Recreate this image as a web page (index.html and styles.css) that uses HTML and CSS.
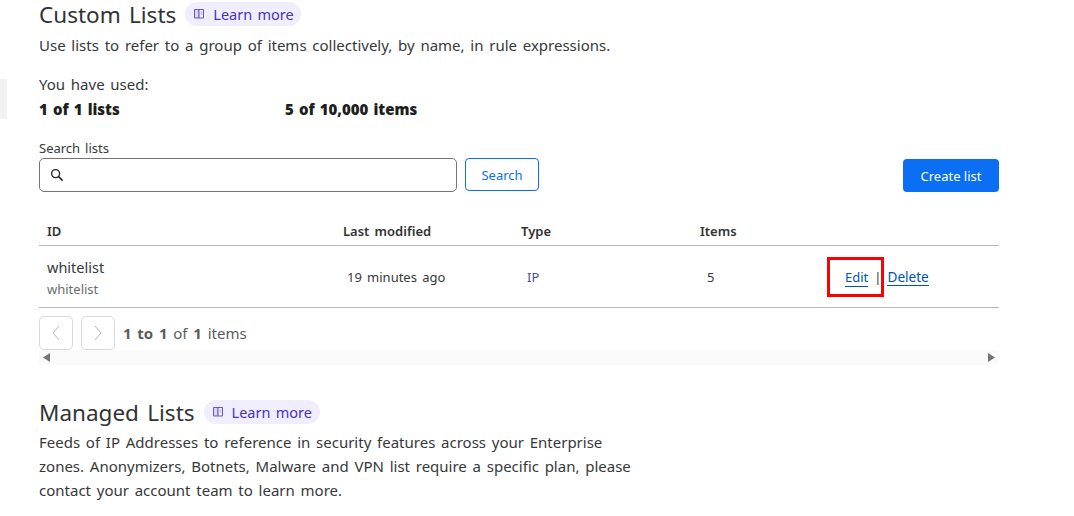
FILE: index.html
```html
<!DOCTYPE html>
<html lang="en">
<head>
<meta charset="utf-8">
<title>Custom Lists</title>
<link rel="stylesheet" href="styles.css">
</head>
<body>
<div class="sliver"></div>
<main class="page">
  <section class="head">
    <div class="title-row">
      <h2 class="title">Custom Lists</h2>
      <a class="pill" href="#">
        <svg class="book" viewBox="0 0 12 12" width="12" height="12"><path d="M.5 1.5h4.5v8.5H.5z" fill="#dcd5f8" stroke="#6a55c8"/><path d="M5 1.5h4.5v8.5H5z" fill="#f6f4ff" stroke="#6a55c8"/><path d="M6.5 4h2M6.5 6h2" stroke="#a99ae6"/></svg>
        <span>Learn more</span>
      </a>
    </div>
    <p class="desc">Use lists to refer to a group of items collectively, by name, in rule expressions.</p>
  </section>
  <section class="usage">
    <div>You have used:</div>
    <div class="usage-row"><strong class="usage-a">1 of 1 lists</strong><strong>5 of 10,000 items</strong></div>
  </section>
  <section class="search">
    <div class="search-main">
      <label class="search-label">Search lists</label>
      <div class="search-controls">
        <div class="input">
          <svg viewBox="0 0 16 16" width="16" height="16"><circle cx="6.6" cy="6.6" r="4" fill="none" stroke="#222" stroke-width="1.3"/><path d="M9.6 9.6l4 4" stroke="#222" stroke-width="1.5" fill="none"/></svg>
        </div>
        <button class="btn-outline">Search</button>
      </div>
    </div>
    <button class="btn-primary">Create list</button>
  </section>
  <table class="table">
    <thead>
      <tr><th class="c-id">ID</th><th class="c-mod">Last modified</th><th class="c-type">Type</th><th class="c-items">Items</th><th></th></tr>
    </thead>
    <tbody>
      <tr>
        <td class="id-cell"><div class="name">whitelist</div><div class="sub">whitelist</div></td>
        <td class="val">19 minutes ago</td>
        <td class="val type">IP</td>
        <td class="val count">5</td>
        <td class="actions">
          <span class="hl"><a href="#">Edit</a></span><span class="sep">|</span><a href="#" class="del">Delete</a>
        </td>
      </tr>
    </tbody>
  </table>
  <div class="pager">
    <button class="pg"><svg viewBox="0 0 12 20" width="12" height="20"><path d="M9 3L3 10l6 7" fill="none" stroke="#b5b5b5" stroke-width="1"/></svg></button>
    <button class="pg"><svg viewBox="0 0 12 20" width="12" height="20"><path d="M3 3l6 7-6 7" fill="none" stroke="#b5b5b5" stroke-width="1"/></svg></button>
    <span class="pg-text"><b>1 to 1</b> of <b>1</b> items</span>
  </div>
  <div class="scroll">
    <svg viewBox="0 0 7 9" width="7" height="9"><path d="M7 0v9L0 4.5z" fill="#757575"/></svg>
    <svg viewBox="0 0 7 9" width="7" height="9"><path d="M0 0v9l7-4.5z" fill="#757575"/></svg>
  </div>
  <section class="managed">
    <div class="title-row">
      <h2 class="title">Managed Lists</h2>
      <a class="pill" href="#">
        <svg class="book" viewBox="0 0 12 12" width="12" height="12"><path d="M.5 1.5h4.5v8.5H.5z" fill="#dcd5f8" stroke="#6a55c8"/><path d="M5 1.5h4.5v8.5H5z" fill="#f6f4ff" stroke="#6a55c8"/><path d="M6.5 4h2M6.5 6h2" stroke="#a99ae6"/></svg>
        <span>Learn more</span>
      </a>
    </div>
    <p class="desc narrow">Feeds of IP Addresses to reference in security features across your Enterprise zones. Anonymizers, Botnets, Malware and VPN list require a specific plan, please contact your account team to learn more.</p>
  </section>
</main>
</body>
</html>
```
FILE: styles.css
```css
*, *::before { box-sizing: border-box; }
html, body { margin: 0; padding: 0; height: 516px; overflow: hidden; background: #fff; }
body { font-family: "Noto Sans", sans-serif; color: #36393a; font-size: 15px; line-height: 24px; word-spacing: 1.85px; }
.sliver { position: absolute; left: 0; top: 79px; width: 7px; height: 40px; background: #f2f2f2; }
.page { width: 999px; padding-left: 39px; }
.title-row { display: flex; align-items: center; gap: 9px; height: 30px; }
.title { margin: 0; font-size: 22.5px; font-weight: 400; line-height: 30px; color: #313335; word-spacing: 2.5px; }
.pill { display: inline-flex; align-items: center; gap: 7px; height: 24px; width: 116px; padding: 0 0 0 9px; margin-bottom: 2px; border-radius: 12px; background: #f0eefd; color: #4a32c4; text-decoration: none; font-size: 14.5px; word-spacing: 1.5px; }
.desc { margin: 0; padding-top: 3px; line-height: 24px; }
.head { height: 72px; }
.narrow { width: 600px; padding-top: 2px; }
.usage { height: 54px; }
.usage-row { display: flex; font-weight: 600; color: #1d1f20; padding-top: 1px; word-spacing: 1.2px; }
.usage-a { width: 246px; }
.search { display: flex; justify-content: space-between; align-items: flex-end; margin-top: 12px; }
.search-label { display: block; font-size: 13px; line-height: 20px; word-spacing: 1.5px; }
.search-controls { display: flex; gap: 8px; align-items: center; }
.input { width: 418px; height: 34px; border: 1px solid #757575; border-radius: 5px; display: flex; align-items: center; padding-left: 9px; }
.btn-outline { width: 74px; height: 33px; border: 1px solid #0a6ff2; border-radius: 4px; background: #fff; color: #0a6ff2; font: inherit; font-size: 13px; padding: 0; margin-bottom: 1px; }
.btn-primary { width: 96px; height: 33px; border: 0; border-radius: 4px; background: #0a6ff2; color: #fff; font: inherit; font-size: 13px; padding: 0; }
.table { width: 960px; border-collapse: collapse; table-layout: fixed; margin-top: 20px; }
.table th { font-weight: 600; font-size: 13px; text-align: left; padding: 5px 8px 0; height: 33px; border-bottom: 1px solid #b8b8b8; color: #313335; }
.c-id { width: 296px; } .c-mod { width: 178px; } .c-type { width: 179px; } .c-items { width: 130px; }
.table td { padding: 0 8px; height: 62px; border-bottom: 1px solid #b8b8b8; font-size: 13px; vertical-align: middle; }
.table td.id-cell { padding-top: 3px; }
.name { font-size: 14.5px; line-height: 22px; }
.sub { font-size: 13px; line-height: 22px; color: #6a6d70; }
.table td.val { padding-left: 12px; padding-top: 1px; }
.table td.type { padding-left: 14px; color: #44508a; }
.table td.count { padding-left: 15px; }
.table td.actions { padding: 1px 0 0; }
.actions a { color: #0051c3; text-decoration: none; border-bottom: 1px solid #0051c3; font-size: 13px; line-height: 17px; display: inline-block; word-spacing: 0; }
.actions a.del { font-size: 13.6px; }
.hl { display: inline-block; position: relative; margin-left: 23px; }
.hl::before { content: ""; position: absolute; left: -18px; top: -8px; width: 57px; height: 40px; border: 3px solid #f00; }
.sep { margin: 0 6px 0 6px; color: #36393a; }
.pager { display: flex; align-items: center; gap: 8px; height: 34px; margin-top: 8px; }
.pg { width: 34px; height: 34px; border: 1px solid #d9d9d9; border-radius: 5px; background: #fff; padding: 0; display: flex; align-items: center; justify-content: center; }
.pg-text { color: #595c5e; }
.pg-text b { font-weight: 700; }
.scroll { width: 960px; height: 15px; background: #fafafa; display: flex; justify-content: space-between; align-items: center; padding: 0 4px; }
.managed { margin-top: 33px; }
```
